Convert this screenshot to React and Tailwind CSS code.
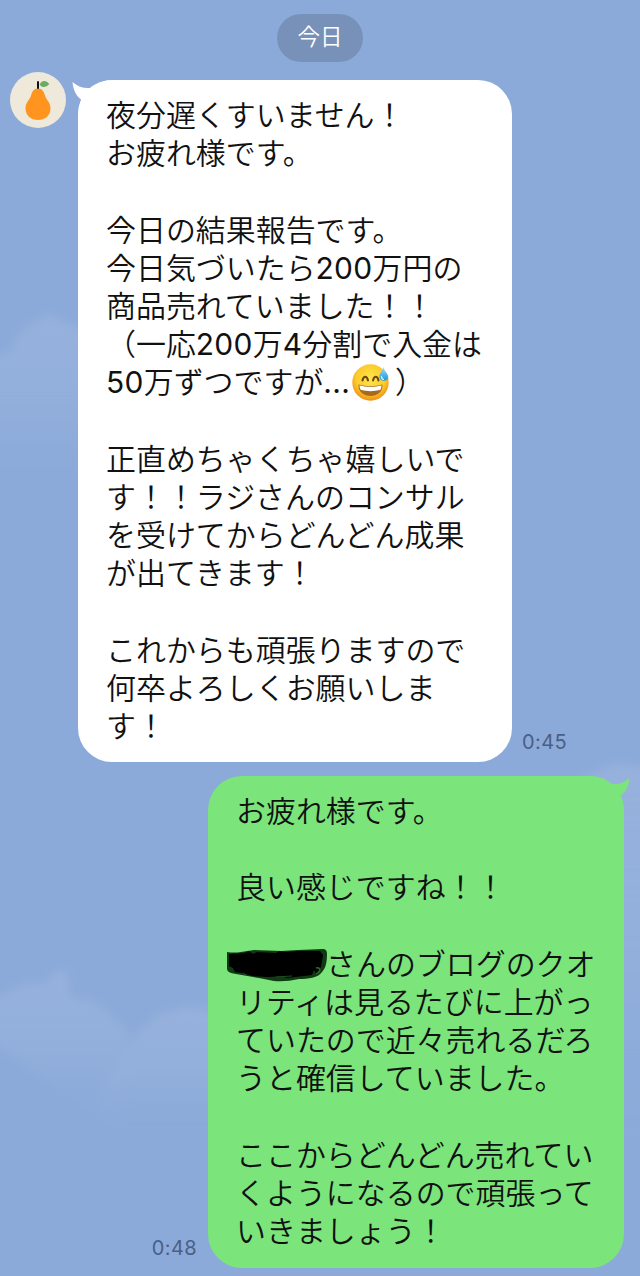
import React from 'react';

const received = [
    '夜分遅くすいません！',
    'お疲れ様です。',
    '',
    '今日の結果報告です。',
    <>今日気づいたら<Num>200</Num>万円の</>,
    '商品売れていました！！',
    <>（一応<Num>200</Num>万<Num>4</Num>分割で入金は</>,
    <><Num>50</Num>万ずつですが<Num>...</Num><SweatSmile />）</>,
    '',
    '正直めちゃくちゃ嬉しいで',
    'す！！ラジさんのコンサル',
    'を受けてからどんどん成果',
    'が出てきます！',
    '',
    'これからも頑張りますので',
    '何卒よろしくお願いしま',
    'す！',
];

const sent = [
    'お疲れ様です。',
    '',
    '良い感じですね！！',
    '',
    <><Redacted />さんのブログのクオ</>,
    'リティは見るたびに上がっ',
    'ていたので近々売れるだろ',
    'うと確信していました。',
    '',
    'ここからどんどん売れてい',
    'くようになるので頑張って',
    'いきましょう！',
];

function Num({ children }) {
    return <span className="font-[430] tracking-[0.3px]">{children}</span>;
}

function SweatSmile() {
    return (
        <span className="relative inline-block w-[45px] h-5">
            <svg viewBox="0 0 38 38" className="absolute left-[2px] -top-[10px] w-[38px] h-[38px] max-w-none">
                <defs>
                    <radialGradient id="face" cx="50%" cy="40%" r="60%">
                        <stop offset="0" stopColor="#ffe84a" />
                        <stop offset="0.65" stopColor="#fdcb2c" />
                        <stop offset="1" stopColor="#ee9014" />
                    </radialGradient>
                    <linearGradient id="drop" x1="0" y1="0" x2="0" y2="1">
                        <stop offset="0" stopColor="#a5dcf6" />
                        <stop offset="1" stopColor="#1898dc" />
                    </linearGradient>
                </defs>
                <circle cx="18.5" cy="19.5" r="18.2" fill="url(#face)" />
                <path d="M10.5 17.5c1-5 4.500-5 5.500 0M21 17.500c1-5 4.500-5 5.500 0" fill="none" stroke="#70430f" strokeWidth="2" strokeLinecap="round" />
                <path d="M6.500 21.500C14 23.500 23 23.500 30.500 21.500C31 29 25 33 18.500 33S6 29 6.500 21.500Z" fill="#a8691a" />
                <path d="M7.500 22.500C14 24.200 23 24.200 29.500 22.500C29.500 25 28.800 26.500 28 27C22 28.500 15 28.500 9 27C8.200 26 7.500 24.500 7.500 22.500Z" fill="#fff" />
                <path d="M31.300 3.500C31.500 8 36.300 10 36.300 14.200C36.300 19 27.300 19 27.300 13.500C27.300 10.500 31 8 31.300 3.500Z" fill="url(#drop)" />
                <path d="M29.500 13.500c0 2 1 2.700 2 2.800" fill="none" stroke="#d9f2fd" strokeWidth="1.300" strokeLinecap="round" />
            </svg>
        </span>
    );
}

// name scribbled out with a marker
function Redacted() {
    return (
        <span className="relative inline-block w-[90px] h-5">
            <svg viewBox="0 0 102 36" className="absolute -left-[10px] -top-[8px] w-[102px] h-9 max-w-none">
                <path d="M1 5Q8 6 15 5L28 3L55 4L72 3L97 2Q101 2 101 7C101 14 100 21 96 25C92 31 82 32 73 32Q60 35 48 34L33 31L10 27Q1 26 1 22Z" fill="#0f3a14" />
                <path d="M3 7L18 6L23 4L27 7L31 5L50 6L53 4L60 5L72 4L94 4L97 8L95 20L90 27L88 23L86 28L78 29L60 31L58 29L42 30L26 29L16 26L9 25L7 21L3 19Z" fill="#000" />
                <path d="M90 21c3-1 5 1 3 4l-3 2" fill="none" stroke="#286b2d" strokeWidth="1.500" />
                <path d="M17 26l3 2M50 30l16-1" stroke="#1c4d20" strokeWidth="1" />
            </svg>
        </span>
    );
}

function Pear() {
    return (
        <div className="w-14 h-14 shrink-0 rounded-full bg-[#efe9dc]">
            <svg viewBox="0 0 56 56" className="w-14 h-14">
                <path d="M28 16.500C32.500 16.500 34 20 35 23.500C36.200 28 40.500 30 40.500 36.500C40.500 43.500 35 48 28 48S15.500 43.500 15.500 36.500C15.500 30 19.800 28 21 23.500C22 20 23.500 16.500 28 16.500Z" fill="#ff951f" />
                <rect x="27" y="9.300" width="2" height="7.500" fill="#111" />
                <path d="M29.500 12.500C32 8 36 8 39.300 12C36 16 32 16 29.500 12.500Z" fill="#69ad62" />
            </svg>
        </div>
    );
}

function Clouds() {
    return (
        <svg viewBox="0 0 640 1276" className="absolute inset-0 w-full h-full">
            <defs>
                <linearGradient id="c1" x1="0" y1="0" x2="0" y2="1">
                    <stop offset="0" stopColor="#97b1dd" />
                    <stop offset="0.500" stopColor="#94b0dc" stopOpacity="0.8" />
                    <stop offset="1" stopColor="#8caad9" stopOpacity="0" />
                </linearGradient>
                <filter id="soft"><feGaussianBlur stdDeviation="4" /></filter>
            </defs>
            <g fill="url(#c1)" filter="url(#soft)">
                <path d="M-10 358L10 352L18 336L34 323L50 314L62 322L85 330V490H-10Z" />
                <path d="M-10 1003L12 990L28 984L48 983L56 971L67 972L70 998L92 1001L110 1015L126 1030L130 1050L115 1130L60 1090L-10 1040Z" />
                <path d="M98 1095L136 1035L158 1015L188 1007L220 1013V1140H105Z" />
                <path d="M560 790L590 775L615 764L650 768V1160H600Z" />
            </g>
        </svg>
    );
}

function Lines({ lines }) {
    return lines.map((line, i) => (
        <p key={i} className="h-[38.2px] whitespace-nowrap">{line}</p>
    ));
}

function App() {
    return (
        <div className="relative w-[640px] h-[1276px] overflow-hidden bg-[#8caad9] font-['Inter','Noto_Sans_CJK_JP',sans-serif] text-[#111]" lang="ja">
            <Clouds />
            <div className="relative flex flex-col pt-3.5">
                <div className="self-center w-[86px] h-12 rounded-full bg-[#7791b9] text-white text-[22.5px] font-[350] leading-[46px] text-center">今日</div>

                <div className="flex items-end mt-2.5 pl-2.5">
                    <div className="self-start"><Pear /></div>
                    <div className="relative w-[434px] h-[682px] mt-2 ml-3 rounded-[34px] bg-white pl-7 pt-4 text-[29.95px] leading-[38.2px] font-[350]">
                        <svg viewBox="0 0 40 34" className="absolute -left-[6px] top-0 w-10 h-[34px]">
                            <path d="M0.500 2C6 7 12 8.500 18 8C23 5 29 1 38 0L36 24L6.500 33C6.500 28 7.500 23 9.500 20C4 16 1 9 0.500 2Z" fill="#fff" />
                        </svg>
                        <div className="relative"><Lines lines={received} /></div>
                    </div>
                    <span className="ml-2.5 mb-2 text-xl leading-6 tracking-[0.4px] text-[#4a5f85]">0:45</span>
                </div>

                <div className="flex items-end justify-end mt-3.5 pr-4">
                    <span className="mr-[11px] mb-2 text-xl leading-6 tracking-[0.4px] text-[#4a5f85]">0:48</span>
                    <div className="relative w-[416px] h-[492px] rounded-[34px] bg-[#7be47b] pl-7 pt-4 text-[29.95px] leading-[38.2px] font-[350]">
                        <svg viewBox="0 0 40 34" className="absolute -right-[6px] top-0 w-10 h-[34px]">
                            <path d="M39.500 2C34 7 28 8.500 22 8C17 5 11 1 2 0L4 24L33.500 33C33.500 28 32.500 23 30.500 20C36 16 39 9 39.500 2Z" fill="#7be47b" />
                        </svg>
                        <div className="relative"><Lines lines={sent} /></div>
                    </div>
                </div>
            </div>
        </div>
    );
}

export default App;
